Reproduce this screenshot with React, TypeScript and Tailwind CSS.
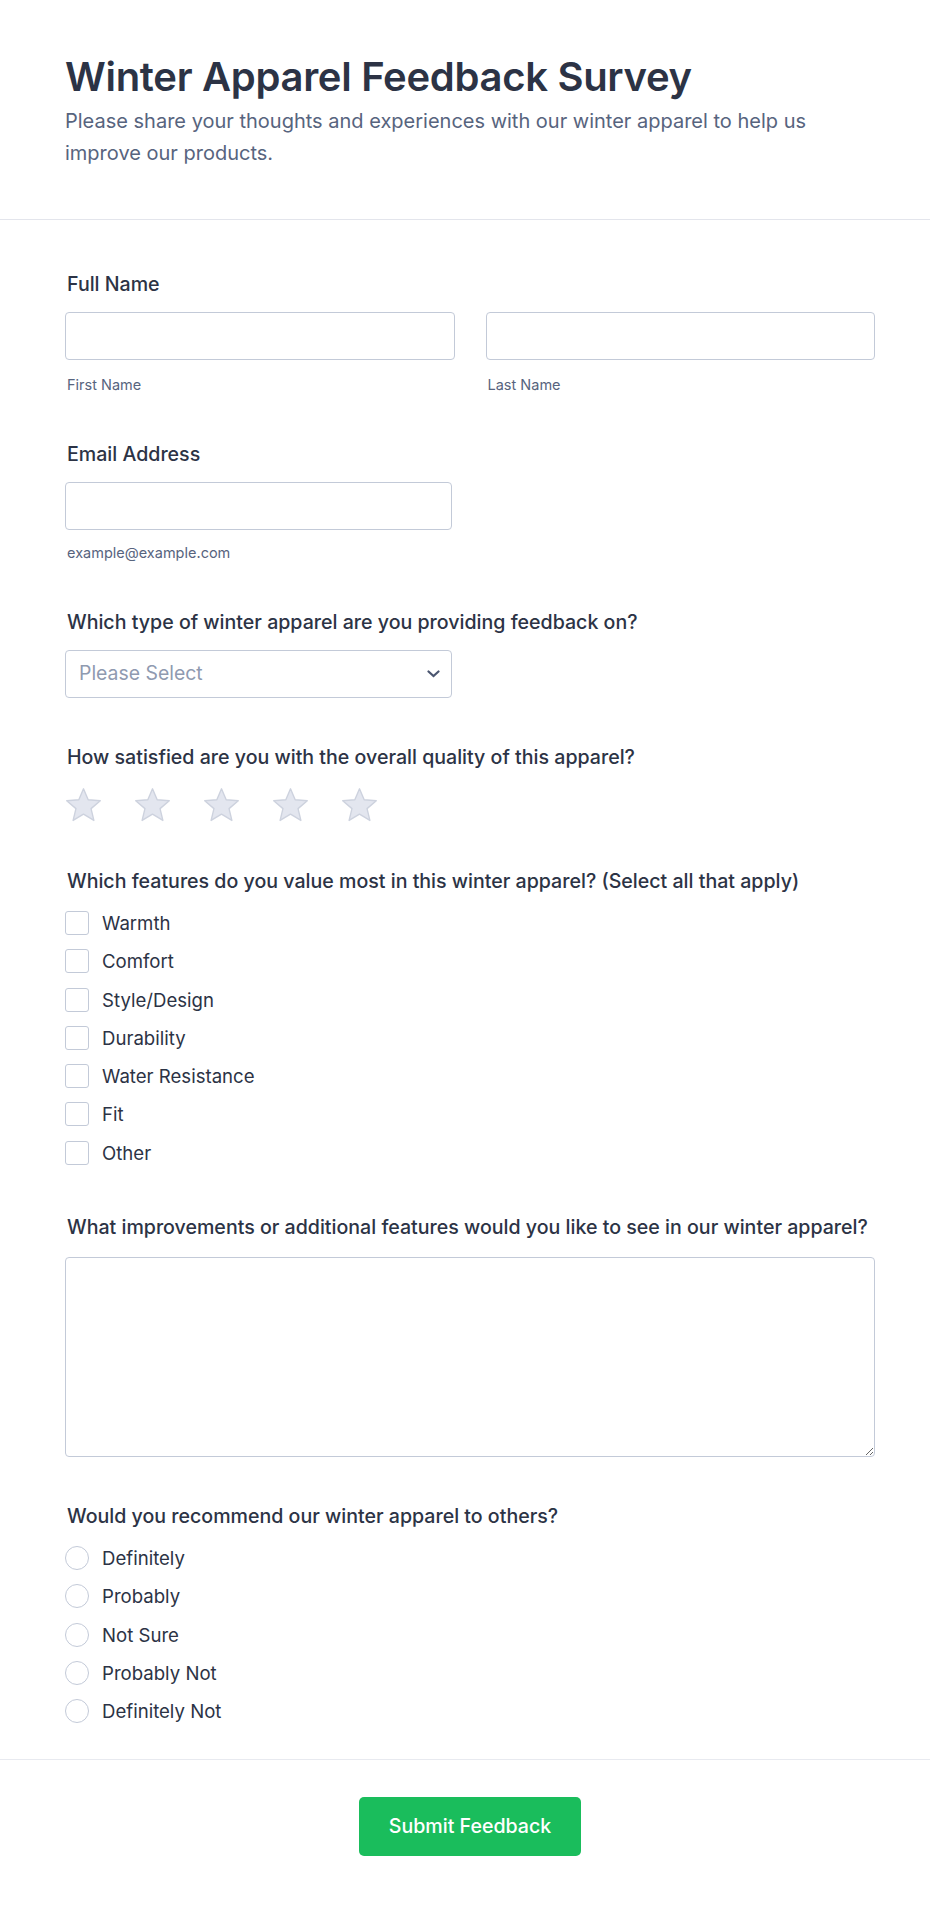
import { useState } from "react";

const features = ["Warmth", "Comfort", "Style/Design", "Durability", "Water Resistance", "Fit", "Other"];
const recommendOptions = ["Definitely", "Probably", "Not Sure", "Probably Not", "Definitely Not"];

function Label({ children }: { children: React.ReactNode }) {
  return <div className="pl-[2px] text-[19.6px] font-medium leading-6 text-[#2c3345]">{children}</div>;
}

function Star() {
  return (
    <svg viewBox="0 0 24 23" className="h-[35px] w-[37px]">
      <path
        d="M12 1.2L15.07 8.38 23.03 9.02 16.96 14.21 18.82 21.98 12 17.82 5.18 21.98 7.04 14.21 0.97 9.02 8.93 8.38Z"
        fill="#e3e6ef"
        stroke="#cdd2de"
        strokeWidth="0.9"
        strokeLinejoin="round"
      />
    </svg>
  );
}

export default function App() {
  const [checked, setChecked] = useState<string[]>([]);
  const [choice, setChoice] = useState<string | null>(null);

  const toggle = (name: string) =>
    setChecked((prev) => (prev.includes(name) ? prev.filter((item) => item !== name) : [...prev, name]));

  return (
    <div className="min-h-[1906px] bg-white font-['Inter','Liberation_Sans',sans-serif] text-[#2c3345]">
      <header className="border-b border-[#e3e5ec] pb-[50px] pl-[65px] pr-[55px] pt-[54px]">
        <h1 className="text-[40px] font-semibold leading-[46px] tracking-[-0.3px] text-[#2c3345]">
          Winter Apparel Feedback Survey
        </h1>
        <p className="mt-[5px] max-w-[770px] text-[20px] leading-[32px] text-[#57647e]">
          Please share your thoughts and experiences with our winter apparel to help us improve our products.
        </p>
      </header>

      <form className="flex flex-col border-b border-[#e8eaf0] pb-[36px] pl-[65px] pr-[55px] pt-[52px]">
        <div>
          <Label>Full Name</Label>
          <div className="mt-4 grid grid-cols-2 gap-[31px]">
            <div>
              <input className="h-[48px] w-full rounded border border-[#c3cad8] px-3 outline-none" />
              <div className="mt-[15px] pl-[2px] text-[14.5px] leading-5 text-[#57647e]">First Name</div>
            </div>
            <div>
              <input className="h-[48px] w-full rounded border border-[#c3cad8] px-3 outline-none" />
              <div className="mt-[15px] pl-[2px] text-[14.5px] leading-5 text-[#57647e]">Last Name</div>
            </div>
          </div>
        </div>

        <div className="mt-[47px]">
          <Label>Email Address</Label>
          <input className="mt-4 h-[48px] w-[387px] rounded border border-[#c3cad8] px-3 outline-none" />
          <div className="mt-[13px] pl-[2px] text-[14.5px] leading-5 text-[#57647e]">example@example.com</div>
        </div>

        <div className="mt-[47px]">
          <Label>Which type of winter apparel are you providing feedback on?</Label>
          <div className="mt-4 flex h-[48px] w-[387px] items-center justify-between rounded border border-[#c3cad8] pl-[13px] pr-[11px]">
            <span className="text-[19.4px] text-[#8f9ab0]">Please Select</span>
            <svg viewBox="0 0 13 8" className="h-[8px] w-[13px]">
              <path d="M1.5 1.5L6.5 6l5-4.5" fill="none" stroke="#4b5670" strokeWidth="2.2" strokeLinecap="round" />
            </svg>
          </div>
        </div>

        <div className="mt-[47px]">
          <Label>How satisfied are you with the overall quality of this apparel?</Label>
          <div className="mt-[18px] flex gap-[32px]">
            {[1, 2, 3, 4, 5].map((n) => (
              <Star key={n} />
            ))}
          </div>
        </div>

        <div className="mt-[47px]">
          <Label>Which features do you value most in this winter apparel? (Select all that apply)</Label>
          <div className="mt-[18px] flex flex-col gap-[14.3px]">
            {features.map((item) => (
              <label key={item} className="flex h-6 cursor-pointer items-center gap-[13px]">
                <span
                  onClick={() => toggle(item)}
                  className={`h-6 w-6 shrink-0 rounded-[3px] border ${
                    checked.includes(item) ? "border-[#2e69ff] bg-[#2e69ff]" : "border-[#c3cad8] bg-white"
                  }`}
                />
                <span className="text-[18.6px] leading-6 text-[#2c3345]">{item}</span>
              </label>
            ))}
          </div>
        </div>

        <div className="mt-[50px]">
          <Label>What improvements or additional features would you like to see in our winter apparel?</Label>
          <textarea className="mt-[18px] block h-[200px] w-full rounded border border-[#c3cad8] p-3 outline-none" />
        </div>

        <div className="mt-[47px]">
          <Label>Would you recommend our winter apparel to others?</Label>
          <div className="mt-[18px] flex flex-col gap-[14.4px]">
            {recommendOptions.map((item) => (
              <label key={item} className="flex h-6 cursor-pointer items-center gap-[13px]" onClick={() => setChoice(item)}>
                <span
                  className={`h-6 w-6 shrink-0 rounded-full border ${
                    choice === item ? "border-[6px] border-[#2e69ff]" : "border-[#c3cad8]"
                  }`}
                />
                <span className="text-[18.6px] leading-6 text-[#2c3345]">{item}</span>
              </label>
            ))}
          </div>
        </div>
      </form>

      <div className="flex justify-center pb-[50px] pl-[65px] pr-[55px] pt-[37px]">
        <button
          type="button"
          className="h-[59px] w-[222px] rounded-[5px] bg-[#1abd5c] text-[19.6px] font-medium text-white"
        >
          Submit Feedback
        </button>
      </div>
    </div>
  );
}
